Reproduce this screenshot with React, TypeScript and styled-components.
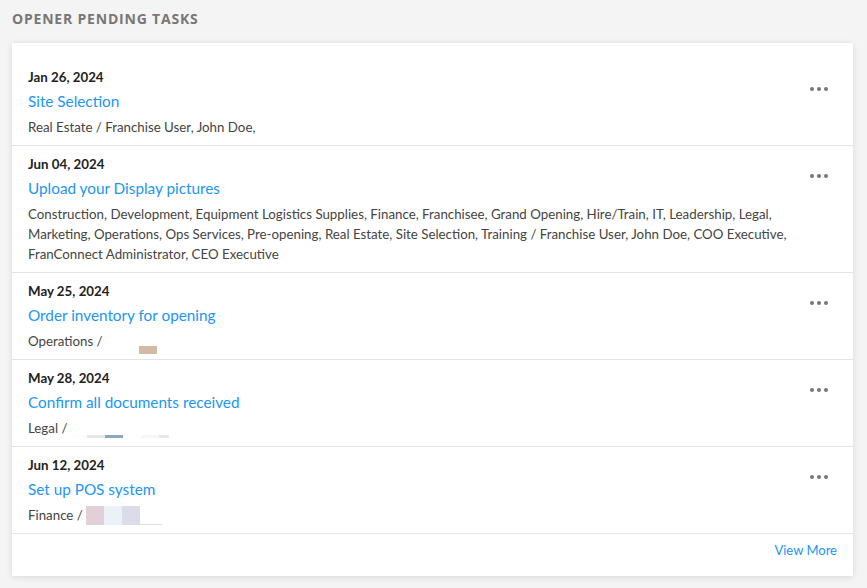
import * as React from "react";
import styled, { createGlobalStyle } from "styled-components";

const GlobalStyle = createGlobalStyle`
  html, body {
    margin: 0;
    padding: 0;
    background: #f4f4f4;
  }
  body {
    font-family: Lato, "Noto Sans", sans-serif;
  }
`;

const Page = styled.div`
  width: 867px;
  height: 588px;
  padding: 10px 14px 0 12px;
  box-sizing: border-box;
`;

const Heading = styled.h2`
  margin: 0 0 15px;
  font-family: "Open Sans", "Noto Sans", sans-serif;
  font-weight: 700;
  font-size: 14px;
  line-height: 18px;
  color: #777;
  letter-spacing: 0.8px;
`;

const Card = styled.div`
  background: #fff;
  box-shadow: 0 1px 6px rgba(0, 0, 0, 0.12);
  padding-top: 16px;
`;

const Row = styled.div`
  display: flex;
  align-items: flex-start;
  padding: 9px 25px 8px 16px;
  border-bottom: 1px solid #e4e4e4;
`;

const Body = styled.div`
  flex: 1;
  min-width: 0;
  padding-right: 8px;
`;

const DateLine = styled.div`
  font-size: 13.3px;
  font-weight: 700;
  line-height: 18px;
  color: #222;
`;

const Title = styled.a`
  display: block;
  margin-top: 5px;
  font-size: 15.3px;
  line-height: 20px;
  color: #2196f3;
  text-decoration: none;
  cursor: pointer;
`;

const Meta = styled.div`
  margin-top: 6px;
  font-size: 13.3px;
  line-height: 20px;
  color: #444;
`;

const Blur = styled.span<{ $w: number; $h: number; $c: string; $dy: number }>`
  display: inline-block;
  position: relative;
  vertical-align: top;
  top: ${({ $dy }) => $dy}px;
  width: ${({ $w }) => $w}px;
  height: ${({ $h }) => $h}px;
  background: ${({ $c }) => $c};
`;

const MoreButton = styled.button`
  display: flex;
  gap: 3px;
  margin-top: 19px;
  padding: 0;
  border: none;
  background: transparent;
  cursor: pointer;
`;

const Dot = styled.span`
  width: 4px;
  height: 4px;
  border-radius: 50%;
  background: #777;
`;

const Footer = styled.div`
  display: flex;
  justify-content: flex-end;
  align-items: flex-start;
  box-sizing: border-box;
  height: 42px;
  padding: 8px 16px 0;
`;

const ViewMore = styled.a`
  font-size: 13px;
  line-height: 16px;
  color: #2196f3;
  cursor: pointer;
`;

type BlurPart = { w: number; h: number; c: string; dy: number };

interface ITask {
  date: string;
  title: string;
  meta: string;
  blur?: BlurPart[];
}

const tasks: ITask[] = [
  {
    date: "Jan 26, 2024",
    title: "Site Selection",
    meta: "Real Estate / Franchise User, John Doe,",
  },
  {
    date: "Jun 04, 2024",
    title: "Upload your Display pictures",
    meta:
      "Construction, Development, Equipment Logistics Supplies, Finance, Franchisee, Grand Opening, Hire/Train, IT, Leadership, Legal, Marketing, Operations, Ops Services, Pre-opening, Real Estate, Site Selection, Training / Franchise User, John Doe, COO Executive, FranConnect Administrator, CEO Executive",
  },
  {
    date: "May 25, 2024",
    title: "Order inventory for opening",
    meta: "Operations / ",
    blur: [
      { w: 33, h: 8, c: "#fff", dy: 15 },
      { w: 18, h: 8, c: "#d2bba5", dy: 15 },
    ],
  },
  {
    date: "May 28, 2024",
    title: "Confirm all documents received",
    meta: "Legal / ",
    blur: [
      { w: 16, h: 3, c: "#fbfdff", dy: 17 },
      { w: 18, h: 3, c: "#e8e8e8", dy: 17 },
      { w: 18, h: 3, c: "#88a8c4", dy: 17 },
      { w: 18, h: 3, c: "#fff", dy: 17 },
      { w: 18, h: 3, c: "#faf5f2", dy: 17 },
      { w: 10, h: 3, c: "#e8e8e8", dy: 17 },
    ],
  },
  {
    date: "Jun 12, 2024",
    title: "Set up POS system",
    meta: "Finance / ",
    blur: [
      { w: 18, h: 19, c: "#e2d0d8", dy: 1 },
      { w: 18, h: 19, c: "#eaf2f8", dy: 1 },
      { w: 18, h: 19, c: "#dcdce8", dy: 1 },
      { w: 22, h: 1, c: "#ddd", dy: 19 },
    ],
  },
];

const TaskRow = ({ task }: { task: ITask }) => (
  <Row>
    <Body>
      <DateLine>{task.date}</DateLine>
      <Title>{task.title}</Title>
      <Meta>
        {task.meta}
        {task.blur &&
          task.blur.map((b, i) => (
            <Blur key={i} $w={b.w} $h={b.h} $c={b.c} $dy={b.dy} />
          ))}
      </Meta>
    </Body>
    <MoreButton aria-label="More actions">
      <Dot />
      <Dot />
      <Dot />
    </MoreButton>
  </Row>
);

export default function App() {
  return (
    <>
      <GlobalStyle />
      <Page>
        <Heading>OPENER PENDING TASKS</Heading>
        <Card>
          {tasks.map((t) => (
            <TaskRow key={t.date + t.title} task={t} />
          ))}
          <Footer>
            <ViewMore>View More</ViewMore>
          </Footer>
        </Card>
      </Page>
    </>
  );
}
